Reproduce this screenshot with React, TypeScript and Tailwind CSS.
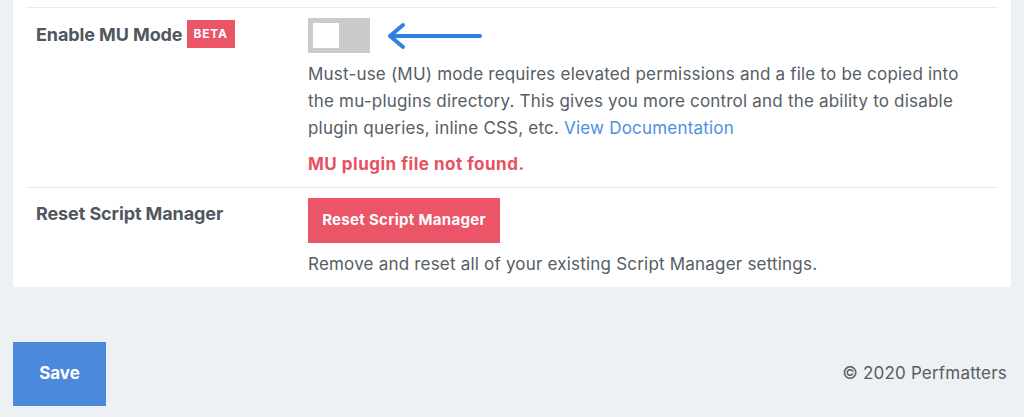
import React from "react";

export default function App() {
  const font = { fontFamily: "Inter, 'Noto Sans', sans-serif" };
  return (
    <div className="w-full h-[417px] bg-[#eef1f4] overflow-hidden" style={font}>
      <div className="mx-[13px] bg-white px-[13px] pt-[7px]">
        {/* Row 1 */}
        <div className="flex border-t border-[#e9ebee] pt-[10px] pb-[9px]">
          <div className="w-[282px] pl-[10px] flex items-center h-[30px] mt-[1px]">
            <span className="text-[18px] font-bold text-[#50575e] tracking-[-0.1px]">Enable MU Mode</span>
            <span className="ml-[4px] bg-[#ec5467] text-white text-[12px] font-bold tracking-[0.8px] h-[28px] px-[7px] flex items-center">BETA</span>
          </div>
          <div className="flex-1">
            <div className="flex items-center">
              <div className="w-[62px] h-[35px] bg-[#cbcbcb] p-[5px]">
                <div className="w-[26px] h-[25px] bg-white" />
              </div>
              <svg width="100" height="30" viewBox="0 0 100 30" className="ml-[16px]">
                <path d="M4 15 H94 M4 15 L17 4 M4 15 L17 26" stroke="#2f80e2" strokeWidth="4" strokeLinecap="round" strokeLinejoin="round" fill="none" />
              </svg>
            </div>
            <p className="mt-[8px] text-[17px] tracking-[0.2px] leading-[27px] text-[#555d66]">
              Must-use (MU) mode requires elevated permissions and a file to be copied into
              <br />
              the mu-plugins directory. This gives you more control and the ability to disable
              <br />
              plugin queries, inline CSS, etc. <span className="text-[#4a8fe0]">View Documentation</span>
            </p>
            <p className="mt-[9px] text-[17px] tracking-[0.5px] leading-[27px] font-bold text-[#e9505f]">MU plugin file not found.</p>
          </div>
        </div>
        {/* Row 2 */}
        <div className="flex border-t border-[#e9ebee] pt-[10px] pb-[9px]">
          <div className="w-[282px] pl-[10px] h-[30px] flex items-center">
            <span className="text-[18px] font-bold text-[#50575e] tracking-[-0.1px]">Reset Script Manager</span>
          </div>
          <div className="flex-1">
            <button className="w-[192px] h-[45px] bg-[#ec5467] text-white text-[15px] tracking-[0.3px] font-bold">Reset Script Manager</button>
            <p className="mt-[8px] text-[17px] tracking-[0.2px] leading-[27px] text-[#555d66]">
              Remove and reset all of your existing Script Manager settings.
            </p>
          </div>
        </div>
      </div>
      <div className="flex items-center justify-between mt-[55px] pl-[13px] pr-[17px]">
        <button className="w-[93px] h-[64px] bg-[#4a89dc] text-white text-[17px] font-bold">Save</button>
        <span className="text-[17px] tracking-[0.2px] text-[#555d66]">© 2020 Perfmatters</span>
      </div>
    </div>
  );
}
